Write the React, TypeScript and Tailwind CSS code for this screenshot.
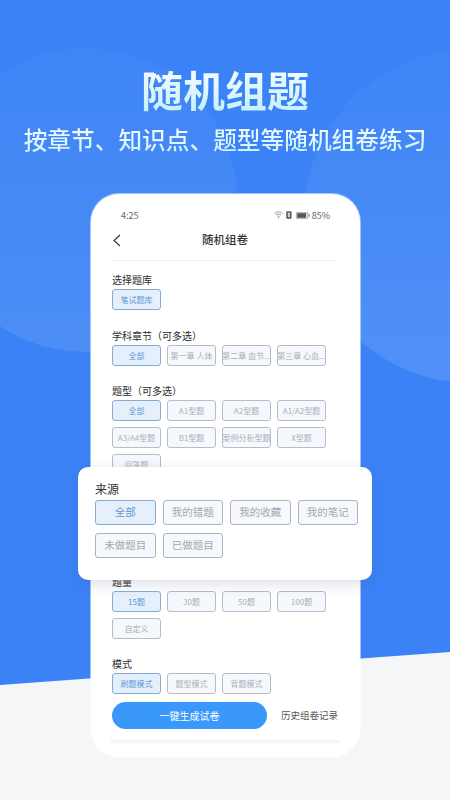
const font = { fontFamily: '"Noto Sans CJK SC", "Noto Sans", sans-serif' };

function Chip({ label, active }: { label: string; active?: boolean }) {
    return (
        <div className={`w-[49px] h-[21px] flex items-center justify-center rounded-[3px] border text-[8px] whitespace-nowrap overflow-hidden ${active ? 'bg-[#e5f0fc] border-[#86acd4] text-[#5f97d6]' : 'bg-[#f5f8fc] border-[#b6bdc7] text-[#a9afb7]'}`}>
            {label}
        </div>
    );
}

function BigChip({ label, active }: { label: string; active?: boolean }) {
    return (
        <div className={`w-[60.5px] h-[25px] flex items-center justify-center rounded-[3px] border text-[10.5px] whitespace-nowrap ${active ? 'bg-[#e5f0fc] border-[#86acd4] text-[#5f97d6]' : 'bg-[#f5f8fc] border-[#adb4bf] text-[#a3a9b1]'}`}>
            {label}
        </div>
    );
}

function Section({ title, chips, className }: { title: string; chips: string[]; className?: string }) {
    return (
        <div className={className}>
            <div className="text-[10px] leading-[15px] text-[#2b2b2b] mb-[2px]">{title}</div>
            <div className="flex flex-wrap gap-[6px] w-[220px]">
                {chips.map((c, i) => <Chip key={c} label={c} active={i === 0} />)}
            </div>
        </div>
    );
}

function StatusIcons() {
    return (
        <div className="flex items-center gap-[2px] text-[#666]">
            <svg width="9" height="8" viewBox="0 0 9 8" fill="none" stroke="#666" strokeWidth="0.7">
                <path d="M0.5 2.5 C3 0.3 6 0.3 8.5 2.5" />
                <path d="M2 4 C3.5 2.8 5.5 2.8 7 4" />
                <path d="M3.4 5.6 C4.1 5 4.9 5 5.6 5.6" />
                <circle cx="4.5" cy="7" r="0.5" fill="#666" stroke="none" />
            </svg>
            <svg className="ml-[1px]" width="6" height="8" viewBox="0 0 6 8"><rect x="0.3" y="0.2" width="5.2" height="7.6" rx="0.8" fill="#555" /><rect x="1.8" y="1.6" width="2.2" height="4.6" fill="#ccc" /></svg>
            <svg className="ml-[2px]" width="14" height="7" viewBox="0 0 14 7"><rect x="0.3" y="0.3" width="11.6" height="6.4" rx="1.2" fill="none" stroke="#666" strokeWidth="0.6" /><rect x="1.2" y="1.2" width="9" height="4.6" fill="#555" /><rect x="12.6" y="2.2" width="1" height="2.6" fill="#777" /></svg>
            <span className="text-[9px] leading-none">85%</span>
        </div>
    );
}

export default function App() {
    return (
        <div style={font} className="relative w-[450px] h-[800px] overflow-hidden bg-[#3b82f6]">
            {/* background shapes */}
            <svg className="absolute inset-0" width="450" height="800" viewBox="0 0 450 800">
                <defs>
                    <linearGradient id="blobLeft" x1="0" y1="0" x2="0" y2="1">
                        <stop offset="0" stopColor="#3f85f6" />
                        <stop offset="1" stopColor="#4d8ef6" />
                    </linearGradient>
                    <linearGradient id="blobRight" x1="0" y1="0" x2="0" y2="1">
                        <stop offset="0" stopColor="#3f85f6" />
                        <stop offset="1" stopColor="#5190f7" />
                    </linearGradient>
                </defs>
                <circle cx="85" cy="200" r="152" fill="url(#blobLeft)" />
                <circle cx="471" cy="216" r="167" fill="url(#blobRight)" />
                <path d="M0 685 L450 652 V800 H0 Z" fill="#f5f6f7" />
            </svg>

            <div className="relative flex flex-col items-center">
                <h1 className="mt-[59px] h-[60px] text-[42px] leading-[60px] font-bold bg-gradient-to-b from-white to-[#bdeefa] bg-clip-text text-transparent">随机组题</h1>
                <p className="mt-[1px] h-[38px] text-[23.7px] leading-[38px] font-medium whitespace-nowrap bg-gradient-to-b from-white to-[#c4f0fb] bg-clip-text text-transparent">按章节、知识点、题型等随机组卷练习</p>

                {/* phone */}
                <div className="mt-[36px] w-[269px] h-[563px] rounded-[28px] bg-white px-[21.5px] shadow-[0_0_0_1px_rgba(255,255,255,0.5)]">
                    <div className="flex items-center justify-between h-[12px] mt-[15px] pl-[9px] pr-[8px]">
                        <span className="text-[9px] leading-none text-[#666]">4:25</span>
                        <StatusIcons />
                    </div>
                    <div className="relative flex items-center justify-center h-[20px] mt-[9px] text-[11.5px] font-medium text-[#333]">
                        <svg className="absolute left-[1px]" width="8" height="13" viewBox="0 0 8 13" fill="none" stroke="#333" strokeWidth="1.1">
                            <path d="M7 1 L1 6.5 L7 12" />
                        </svg>
                        随机组卷
                    </div>
                    <div className="h-px bg-[#f3f4f6] mt-[10px]" />

                    <Section className="mt-[11px]" title="选择题库" chips={['笔试题库']} />
                    <Section className="mt-[18px]" title="学科章节（可多选）" chips={['全部', '第一章 人体', '第二章 血节...', '第三章 心血...']} />
                    <Section className="mt-[17px]" title="题型（可多选）" chips={['全部', 'A1型题', 'A2型题', 'A1/A2型题', 'A3/A4型题', 'B1型题', '案例分析型题', 'X型题', '问答题']} />
                    <Section className="mt-[99px]" title="题量" chips={['15题', '30题', '50题', '100题', '自定义']} />
                    <Section className="mt-[17px]" title="模式" chips={['刷题模式', '题型模式', '背题模式']} />

                    <div className="flex items-center justify-between mt-[8px]">
                        <div className="w-[155px] h-[27px] rounded-full bg-[#3a98fb] text-white text-[10px] flex items-center justify-center">一键生成试卷</div>
                        <span className="text-[9.5px] text-[#555]">历史组卷记录</span>
                    </div>
                    <div className="h-[3px] mt-[11px] -mx-[2px] rounded-full bg-[#f6f6f7]" />
                </div>
            </div>

            {/* floating card */}
            <div className="absolute left-[78px] top-[467px] w-[294px] h-[113px] rounded-[10px] bg-white pl-[17px] pt-[13px] shadow-[0_4px_14px_rgba(60,80,120,0.18)]">
                <div className="text-[12px] leading-[17px] text-[#333] mb-[2.5px]">来源</div>
                <div className="flex flex-wrap gap-x-[7px] gap-y-[8px]">
                    {['全部', '我的错题', '我的收藏', '我的笔记', '未做题目', '已做题目'].map((c, i) => <BigChip key={c} label={c} active={i === 0} />)}
                </div>
            </div>
        </div>
    );
}
